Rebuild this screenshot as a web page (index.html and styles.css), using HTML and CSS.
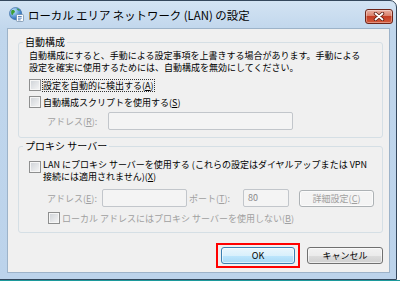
FILE: index.html
```html
<!DOCTYPE html>
<html lang="ja">

<head>
    <meta charset="UTF-8">
    <title>ローカル エリア ネットワーク (LAN) の設定</title>
    <link rel="stylesheet" href="styles.css">
</head>

<body>
    <div class="window">
        <div class="titlebar">
            <svg class="app-icon" width="15" height="15" viewBox="0 0 16 16">
                <defs>
                    <radialGradient id="globe" cx="35%" cy="30%" r="75%">
                        <stop offset="0" stop-color="#c4e8ff" />
                        <stop offset="1" stop-color="#1b64b8" />
                    </radialGradient>
                </defs>
                <circle cx="7" cy="7" r="6.5" fill="url(#globe)" stroke="#2a5d96" stroke-width=".6" />
                <path d="M2.6 3.8c1.5-1 3.2-.5 3.7.7.3.9-.6 1.6-1.4 2.1-.7.5-.4 1.6-1.3 1.9C2.4 8.7 2 5.2 2.6 3.8z" fill="#3c9e33" />
                <path d="M8.4 1.6c1.4.2 2.7 1 3.3 2.1-.8.3-1.9.1-2.5-.5-.4-.4-.9-.9-.8-1.6z" fill="#3c9e33" />
                <rect x="8" y="8" width="7.4" height="7.4" rx="1" fill="#fff" stroke="#6a86a6" stroke-width=".8" />
                <path d="M9.6 10.1h4M9.6 11.9h4M9.6 13.7h2.8" stroke="#3a6db0" stroke-width=".9" />
            </svg>
            <span class="title">ローカル エリア ネットワーク (LAN) の設定</span>
            <span class="close">
                <svg width="12" height="9" viewBox="0 0 12 9">
                    <path d="M2.5 1.5l7 6M9.5 1.5l-7 6" stroke="#5b1a0f" stroke-width="3.4" stroke-linecap="round" />
                    <path d="M2.5 1.5l7 6M9.5 1.5l-7 6" stroke="#fff" stroke-width="1.8" stroke-linecap="round" />
                </svg>
            </span>
        </div>

        <div class="client">
            <fieldset class="group group-auto">
                <legend>自動構成</legend>
                <p class="note">自動構成にすると、手動による設定事項を上書きする場合があります。手動による<br>設定を確実に使用するためには、自動構成を無効にしてください。</p>
                <label class="check first">
                    <span class="box"></span>
                    <span class="focus">設定を自動的に検出する(<u>A</u>)</span>
                </label>
                <label class="check">
                    <span class="box"></span>
                    <span>自動構成スクリプトを使用する(<u>S</u>)</span>
                </label>
                <div class="field-row">
                    <span class="field-label label-r">アドレス(<u>R</u>):</span>
                    <span class="textbox script-box"></span>
                </div>
            </fieldset>

            <fieldset class="group group-proxy">
                <legend>プロキシ サーバー</legend>
                <label class="check multi">
                    <span class="box"></span>
                    <span>LAN にプロキシ サーバーを使用する (これらの設定はダイヤルアップまたは VPN<br>接続には適用されません)(<u>X</u>)</span>
                </label>
                <div class="field-row proxy-row">
                    <span class="field-label label-e">アドレス(<u>E</u>):</span>
                    <span class="textbox address-box"></span>
                    <span class="field-label label-t">ポート(<u>T</u>):</span>
                    <span class="textbox port-box">80</span>
                    <span class="btn btn-disabled">詳細設定(<u>C</u>)</span>
                </div>
                <label class="check sub">
                    <span class="box"></span>
                    <span class="muted">ローカル アドレスにはプロキシ サーバーを使用しない(<u>B</u>)</span>
                </label>
            </fieldset>

            <div class="actions">
                <span class="mark">
                    <span class="btn btn-ok">OK</span>
                </span>
                <span class="btn btn-cancel">キャンセル</span>
            </div>
        </div>
    </div>
</body>

</html>
```

FILE: styles.css
```css
body {
    margin: 0;
    height: 281px;
    overflow: hidden;
    background: linear-gradient(to top, #1c9a9c 1px, #fff 1px);
    font-family: "Noto Sans CJK JP", "Noto Sans", sans-serif;
    font-size: 9px;
    color: #000;
}

.window {
    width: 398px;
    height: 280px;
    box-sizing: border-box;
    margin-left: -1px;
    border: 1px solid #34475c;
    border-top-right-radius: 7px;
    background: linear-gradient(#d3e3f3, #c0d6ec 30px, #bcd3eb);
    display: flex;
    flex-direction: column;
}

.titlebar {
    height: 27px;
    display: flex;
    align-items: center;
    padding: 0 3px 0 9px;
}

.title {
    margin-left: 4px;
    font-size: 11.4px;
    flex: 1;
}

.close {
    align-self: flex-start;
    margin-top: 8px;
    width: 26px;
    height: 13px;
    border: 1px solid #6e2418;
    border-radius: 3px;
    background: linear-gradient(#eab0a2, #d9806b 45%, #c43d24 50%, #d35a3c);
    box-shadow: inset 0 0 0 1px rgba(255, 255, 255, .35);
    display: flex;
    align-items: center;
    justify-content: center;
}

.client {
    flex: 1;
    margin: 0 6px 6px 7px;
    padding: 7px 6px 0 10px;
    background: #f0f0f0;
    border: 1px solid #9db3c9;
}

.group {
    margin: 0;
    padding: 0 8px 7px 10px;
    border: 1px solid #d5dfe5;
    border-radius: 3px;
    min-width: 0;
}

.group legend {
    font-size: 10px;
    line-height: 12px;
    padding: 0 2px;
    margin-left: -6px;
}

.group-proxy {
    margin-top: 2px;
}

.note {
    margin: 2px 0 0;
    line-height: 12px;
}

.check {
    display: flex;
    align-items: center;
    height: 14px;
    margin-top: 3px;
    line-height: 11px;
}

.check.first {
    margin-top: 4px;
}

.box {
    width: 10px;
    height: 10px;
    flex: none;
    margin-right: 2px;
    border: 1px solid #8e8f8f;
    background: linear-gradient(135deg, #cdd1d6, #f7f7f7);
    box-shadow: inset 0 0 0 1px #f6f6f6;
}

.focus {
    outline: 1px dotted #333;
    outline-offset: 0;
}

.check.multi {
    height: auto;
    align-items: flex-start;
    margin-top: 7px;
    line-height: 12px;
}

.check.multi .box {
    margin-top: 2px;
}

.check.sub {
    margin-top: 4px;
    padding-left: 19px;
}

.muted,
.field-label {
    color: #a0a0a0;
}

.field-row {
    display: flex;
    align-items: center;
    height: 18px;
    margin-top: 3px;
    padding-left: 18px;
}

.proxy-row {
    margin-top: 6px;
}

.field-label {
    flex: none;
}

.label-r {
    width: 61px;
}

.label-e {
    width: 55px;
}

.label-t {
    width: 54px;
    margin-left: 2px;
}

.textbox {
    height: 18px;
    box-sizing: border-box;
    border: 1px solid #c2c6cb;
    border-radius: 2px;
    background: #f4f4f4;
    color: #8a8a8a;
    padding-left: 4px;
    line-height: 16px;
}

.script-box {
    width: 185px;
}

.address-box {
    width: 85px;
}

.port-box {
    width: 46px;
}

.btn {
    height: 17px;
    box-sizing: border-box;
    border: 1px solid #707070;
    border-radius: 3px;
    background: linear-gradient(#f2f2f2, #ebebeb 50%, #dddddd 50%, #cfcfcf);
    box-shadow: inset 0 0 0 1px rgba(255, 255, 255, .6);
    display: flex;
    align-items: center;
    justify-content: center;
    line-height: 11px;
}

.btn-disabled {
    width: 75px;
    margin-left: 10px;
    border-color: #adb2b5;
    background: #f4f4f4;
    color: #a0a0a0;
}

.actions {
    display: flex;
    justify-content: flex-end;
    align-items: center;
    gap: 7px;
    margin-top: 10px;
}

.mark {
    border: 2px solid #f00;
    padding: 2px 3px;
}

.btn-ok {
    width: 74px;
    border-color: #3c7fb1;
    background: linear-gradient(#eaf6fd, #d9f0fc 50%, #bee6fd 50%, #a7d9f5);
}

.btn-cancel {
    width: 76px;
}
```
